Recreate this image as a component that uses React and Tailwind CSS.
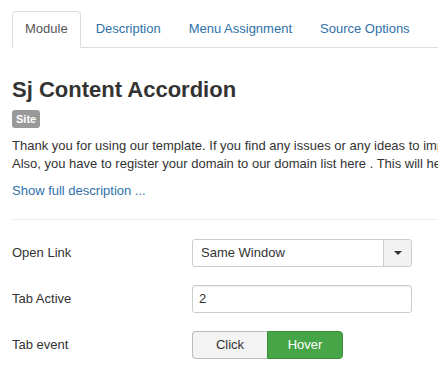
export default function App() {
  return (
    <div
      className="w-[438px] h-[371px] overflow-hidden bg-white text-[13px] leading-[18px] text-[#333]"
      style={{ fontFamily: '"Liberation Sans", Arial, Helvetica, sans-serif' }}
    >
      <div className="flex ml-3 mt-[11px] border-b border-[#ddd] whitespace-nowrap">
        <div className="-mb-px mr-[2px] px-3 py-2 border border-[#ddd] border-b-white rounded-t-[4px] bg-white text-[#555]">
          Module
        </div>
        <div className="mr-[2px] px-3 py-2 border border-transparent text-[#3071a9]">Description</div>
        <div className="mr-[2px] px-3 py-2 border border-transparent text-[#3071a9]">Menu Assignment</div>
        <div className="mr-[2px] px-3 py-2 border border-transparent text-[#3071a9]">Source Options</div>
      </div>

      <div className="pl-3">
        <h2 className="mt-[30px] text-[22px] leading-[24px] font-bold text-[#333] whitespace-nowrap">
          Sj Content Accordion
        </h2>
        <div className="mt-[8px]">
          <span className="inline-block h-[18px] px-1 py-[2px] rounded-[3px] bg-[#999] text-white text-[11px] leading-[14px] font-bold align-top">
            Site
          </span>
        </div>
        <div className="mt-[9px] whitespace-nowrap">
          <div>Thank you for using our template. If you find any issues or any ideas to improve our template, please let us know.</div>
          <div>Also, you have to register your domain to our domain list here . This will help us to support you better.</div>
        </div>
        <div className="mt-[9px] text-[#3071a9] whitespace-nowrap">Show full description ...</div>
        <div className="mt-[19px] border-t border-[#eee]" />

        <div className="mt-[19px] flex flex-col gap-[18px]">
          <div className="flex items-center">
            <div className="w-[180px]">Open Link</div>
            <div className="flex w-[220px] h-[28px] border border-[#ccc] rounded-[3px] bg-white">
              <div className="flex-1 pl-2 leading-[26px] text-[#333]">Same Window</div>
              <div className="w-[28px] border-l border-[#ccc] bg-[#f2f2f2] rounded-r-[3px] flex items-center justify-center">
                <div className="w-0 h-0 border-l-[4px] border-r-[4px] border-t-[4px] border-l-transparent border-r-transparent border-t-[#333]" />
              </div>
            </div>
          </div>

          <div className="flex items-center">
            <div className="w-[180px]">Tab Active</div>
            <div className="w-[220px] h-[28px] border border-[#ccc] rounded-[3px] px-[6px] leading-[26px] bg-white shadow-[inset_0_1px_1px_rgba(0,0,0,0.075)]">
              2
            </div>
          </div>

          <div className="flex items-center">
            <div className="w-[180px]">Tab event</div>
            <div className="flex">
              <div className="w-[75px] h-[28px] flex items-center justify-center border border-[#bbb] border-r-0 bg-[#f3f3f3] rounded-l-[4px] text-[#333]">
                Click
              </div>
              <div className="w-[76px] h-[28px] flex items-center justify-center border border-[#3b8f3b] bg-[#46a546] rounded-r-[4px] text-white">
                Hover
              </div>
            </div>
          </div>
        </div>
      </div>
    </div>
  );
}
